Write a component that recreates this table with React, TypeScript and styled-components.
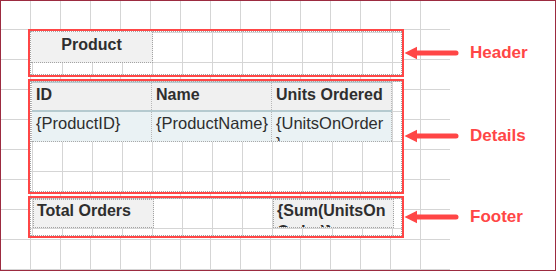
import React from "react";
import styled, { createGlobalStyle } from "styled-components";

const RED = "#ff4646";
const GRID = "#d5d5d5";
const DOT = "#a3a3a3";

const columns = [
  { title: "ID", field: "{ProductID}", inset: 2 },
  { title: "Name", field: "{ProductName}", inset: 0 },
  { title: "Units Ordered", field: "{UnitsOnOrder}", inset: 6 },
];

const Arrow = () => (
  <svg width="55" height="14" viewBox="0 0 55 14" aria-hidden="true">
    <path d="M0.5 7 L13 0.7 L13 13.3 Z" fill={RED} />
    <path d="M12 7 H52" stroke={RED} strokeWidth="5" strokeLinecap="round" />
  </svg>
);

const Callout = ({ label }: { label: string }) => (
  <CalloutWrap>
    <Arrow />
    <CalloutLabel>{label}</CalloutLabel>
  </CalloutWrap>
);

export default function App() {
  return (
    <>
      <GlobalStyle />
      <Designer>
        <BandRow>
          <Band $height={48}>
            <BandBody $gridY={1}>
              <TitleCell>Product</TitleCell>
            </BandBody>
          </Band>
          <Callout label="Header" />
        </BandRow>

        <BandRow>
          <Band $height={115}>
            <BandBody>
              <Table>
                <TableRow $tone="head">
                  {columns.map((c) => (
                    <Cell key={c.title} $tone="head" $inset={2}>
                      {c.title}
                    </Cell>
                  ))}
                </TableRow>
                <TableRow $tone="data">
                  {columns.map((c) => (
                    <Cell key={c.field} $tone="data" $inset={c.inset}>
                      {c.field}
                    </Cell>
                  ))}
                </TableRow>
              </Table>
            </BandBody>
          </Band>
          <Callout label="Details" />
        </BandRow>

        <BandRow>
          <Band $height={42}>
            <BandBody>
              <FooterRow>
                <TotalCell $col={1}>Total Orders</TotalCell>
                <TotalCell $col={3}>{"{Sum(UnitsOnOrder)}"}</TotalCell>
              </FooterRow>
            </BandBody>
          </Band>
          <Callout label="Footer" />
        </BandRow>
      </Designer>
    </>
  );
}

const GlobalStyle = createGlobalStyle`
  html, body {
    margin: 0;
    padding: 0;
    background: #fff;
  }

  body {
    font-family: "Liberation Sans", Arial, sans-serif;
    color: #2e2e2e;
  }
`;

const Designer = styled.div`
  box-sizing: border-box;
  width: 556px;
  height: 271px;
  border: 1px solid #9c2b40;
  padding: 28px 0 0 27px;
  display: flex;
  flex-direction: column;
  gap: 2px;
  background:
    linear-gradient(to right, transparent 449px, #fff 449px) 0 0 / 100% 100% no-repeat,
    linear-gradient(to right, transparent 29px, ${GRID} 29px) 0 0 / 30px 30px,
    linear-gradient(to bottom, transparent 28px, ${GRID} 28px, ${GRID} 29px, transparent 29px) 0 0 / 30px 30px,
    #fff;
`;

const BandRow = styled.div`
  display: flex;
  align-items: center;
`;

const Band = styled.section<{ $height: number }>`
  box-sizing: border-box;
  flex-shrink: 0;
  width: 376px;
  height: ${(p) => p.$height}px;
  border: 2px solid ${RED};
`;

const BandBody = styled.div<{ $gridY?: number }>`
  box-sizing: border-box;
  height: 100%;
  border: 1px dotted ${DOT};
  background:
    linear-gradient(to right, transparent 29px, ${GRID} 29px) 2px 0 / 30px 30px,
    linear-gradient(to bottom, transparent 29px, ${GRID} 29px) 0 ${(p) => p.$gridY ?? 0}px / 30px 30px,
    #fff;
`;

const TitleCell = styled.div`
  box-sizing: border-box;
  width: 122px;
  height: 31px;
  padding-top: 4px;
  background: #f1f1f1;
  border-right: 1px dotted ${DOT};
  border-bottom: 1px dotted ${DOT};
  font-size: 16px;
  font-weight: 700;
  line-height: 18px;
  text-align: center;
`;

const Table = styled.div`
  width: fit-content;
  border-left: 1px dotted #b4b4b4;
`;

const TableRow = styled.div<{ $tone: "head" | "data" }>`
  display: grid;
  grid-template-columns: repeat(3, 120px);
  background: ${(p) => (p.$tone === "head" ? "#f0f0f0" : "#eaf2f4")};
  border-top: ${(p) => (p.$tone === "head" ? "1px solid #b5cacf" : "none")};
  border-bottom: ${(p) =>
    p.$tone === "head" ? "2px solid #b5cacf" : "1px dotted #a9a9a9"};
`;

const Cell = styled.div<{ $tone: "head" | "data"; $inset: number }>`
  box-sizing: border-box;
  height: ${(p) => (p.$tone === "head" ? 27 : 29)}px;
  padding: ${(p) => (p.$tone === "head" ? 3 : 1)}px ${(p) => p.$inset}px 0 4px;
  border-right: 1px dotted #b8b8b8;
  overflow: hidden;
  overflow-wrap: anywhere;
  font-size: ${(p) => (p.$tone === "head" ? "16px" : "16.5px")};
  font-weight: ${(p) => (p.$tone === "head" ? 700 : 400)};
  line-height: ${(p) => (p.$tone === "head" ? 18 : 20)}px;
`;

const FooterRow = styled.div`
  display: grid;
  grid-template-columns: 121px 119px 121px;
  margin-left: 2px;
`;

const TotalCell = styled.div<{ $col: number }>`
  grid-column: ${(p) => p.$col};
  box-sizing: border-box;
  height: 29px;
  padding: 0 4px 0 3px;
  background: #f1f1f1;
  border: 1px dotted ${DOT};
  overflow: hidden;
  overflow-wrap: anywhere;
  font-size: 16px;
  font-weight: 700;
  line-height: 21px;
`;

const CalloutWrap = styled.div`
  display: flex;
  align-items: center;
  gap: 11px;
  margin-top: -1px;

  svg {
    display: block;
  }
`;

const CalloutLabel = styled.span`
  color: ${RED};
  font-size: 17px;
  font-weight: 700;
  line-height: 20px;
`;
